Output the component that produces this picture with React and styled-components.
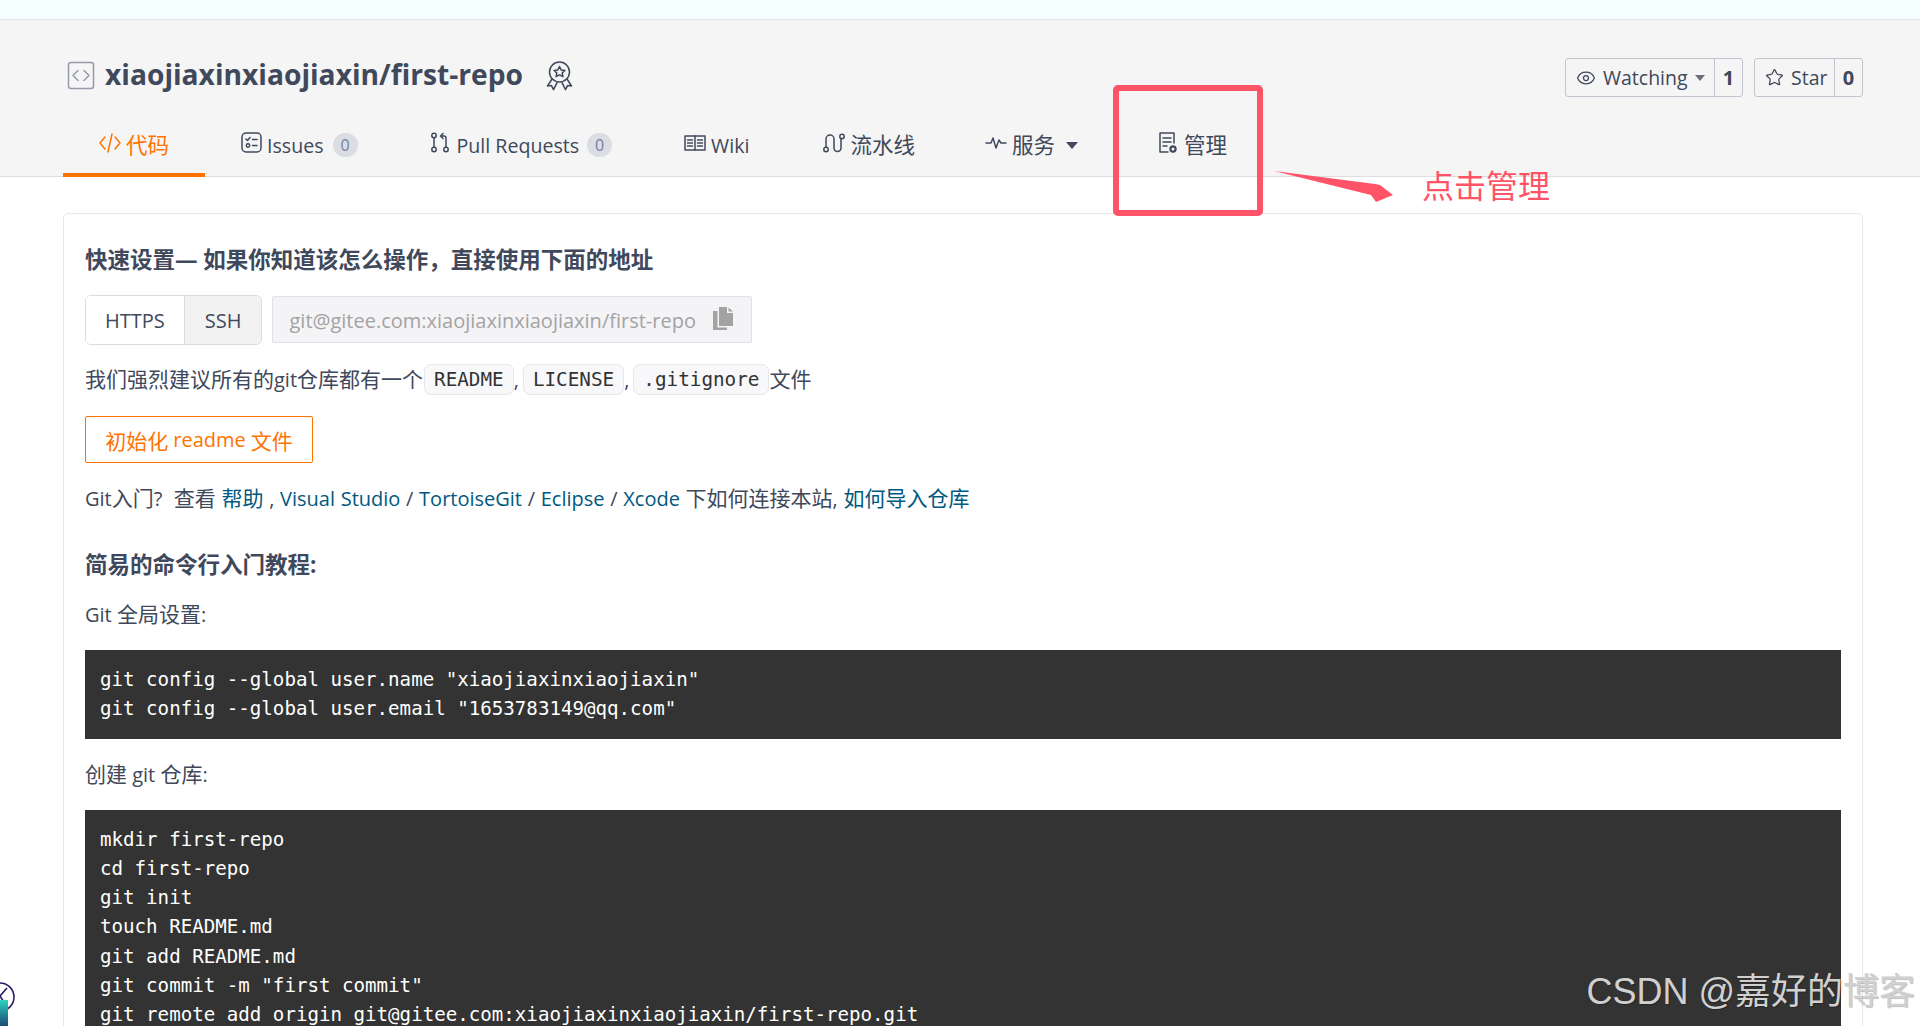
import React from "react";
import styled, { createGlobalStyle } from "styled-components";
import { Eye, Star } from "lucide-react";

const GlobalStyle = createGlobalStyle`
	html, body {
		margin: 0;
		padding: 0;
		background: #fff;
		overflow: hidden;
		height: 1026px;
	}
	body {
		font-family: "Open Sans", "Noto Sans CJK SC", sans-serif;
		color: #40485b;
		font-size: 20px;
	}
`;

const Svg = styled.svg`
	flex: none;
	fill: none;
	stroke: currentColor;
	stroke-width: 1.5;
	stroke-linecap: round;
	stroke-linejoin: round;
`;

const CodeIcon = () => (
	<Svg width="22" height="20" viewBox="0 0 22 20">
		<path d="M6 4l-5 6 5 6M16 4l5 6-5 6M13 1L9 19" />
	</Svg>
);

const IssuesIcon = () => (
	<Svg width="21" height="21" viewBox="0 0 21 21">
		<rect x="1" y="1" width="19" height="19" rx="4" />
		<path d="M5 7l1.5 1.5L9 5.5M11.5 7.5H16M11.5 13.5H16" />
		<circle cx="7" cy="13.5" r="1.7" />
	</Svg>
);

const PullIcon = () => (
	<Svg width="20" height="21" viewBox="0 0 20 21">
		<circle cx="4" cy="3.5" r="2.2" />
		<circle cx="4" cy="17.5" r="2.2" />
		<circle cx="16" cy="17.5" r="2.2" />
		<path d="M4 6v9M16 15V6a2 2 0 0 0-2-2h-3M13 1.500L10.500 4l2.500 2.500" />
	</Svg>
);

const WikiIcon = () => (
	<Svg width="22" height="16" viewBox="0 0 22 16">
		<rect x="1" y="1" width="20" height="14" />
		<path d="M11 1v14M3.500 5h5M3.500 8h5M3.500 11h5M13.500 5h5M13.500 8h5M13.500 11h5" />
	</Svg>
);

const PipelineIcon = () => (
	<Svg width="22" height="20" viewBox="0 0 22 20">
		<circle cx="3" cy="16.5" r="2.2" />
		<circle cx="19" cy="3.5" r="2.2" />
		<path d="M3 14V6a4 4 0 0 1 8 0v9a3.500 3.500 0 0 0 7 0V6" />
	</Svg>
);

const PulseIcon = () => (
	<Svg width="22" height="14" viewBox="0 0 22 14">
		<path d="M1 7h5l2-5 3 10 3-8 2 3h5" />
	</Svg>
);

const ManageIcon = () => (
	<Svg width="18" height="22" viewBox="0 0 18 22">
		<path d="M9 20H1V1h14v10M4 6h8M4 10h8M4 14h4" />
		<circle cx="14" cy="17" r="2.6" strokeWidth="2.2" />
	</Svg>
);

const RepoIcon = () => (
	<Svg width="28" height="29" viewBox="0 0 28 29" strokeWidth="3.2">
		<rect x="1.5" y="1.5" width="25" height="26" rx="2.5" />
		<path d="M11 9.500l-5 5 5 5M17 9.500l5 5-5 5" />
	</Svg>
);

const BadgeIcon = () => (
	<Svg width="27" height="30" viewBox="0 0 27 30">
		<circle cx="13.5" cy="11" r="10" />
		<path d="M13.500 5.500l1.700 3.400 3.700.5-2.700 2.600.7 3.700-3.400-1.800-3.400 1.800.7-3.700-2.700-2.600 3.700-.5z" />
		<path d="M6 18l-4.500 7 4-.4 2 4 3.500-7M21 18l4.500 7-4-.4-2 4-3.500-7" />
	</Svg>
);

const CopyIcon = () => (
	<svg width="20" height="23" viewBox="0 0 20 23" fill="#a3a3a3">
		<path d="M6 0h8v6h6v13H6zM15.500 0.500L20 4.500h-4.500z" />
		<path d="M0 4h4.500v16.500H14V23H0z" />
	</svg>
);

const App = () => {
	return (
		<Page>
			<GlobalStyle />
			<TopStrip />
			<Header>
				<HeaderRow>
					<RepoTitle>
						<RepoMark>
							<RepoIcon />
						</RepoMark>
						<RepoName>xiaojiaxinxiaojiaxin/first-repo</RepoName>
						<BadgeMark>
							<BadgeIcon />
						</BadgeMark>
					</RepoTitle>
					<Actions>
						<ActionGroup>
							<ActionMain $width={149}>
								<Eye size={20} strokeWidth={1.5} />
								<span>Watching</span>
								<SmallCaret />
							</ActionMain>
							<ActionCount $width={27}>1</ActionCount>
						</ActionGroup>
						<ActionGroup>
							<ActionMain $width={80}>
								<Star size={19} strokeWidth={1.6} />
								<span>Star</span>
							</ActionMain>
							<ActionCount $width={27}>0</ActionCount>
						</ActionGroup>
					</Actions>
				</HeaderRow>
				<Tabs>
					<Tab $active>
						<CodeIcon />
						<TabHan>代码</TabHan>
					</Tab>
					<Tab>
						<IssuesIcon />
						<span>Issues</span>
						<Count $left={4}>0</Count>
					</Tab>
					<Tab $gap={7}>
						<PullIcon />
						<span>Pull Requests</span>
						<Count $left={1}>0</Count>
					</Tab>
					<Tab $extra={2}>
						<WikiIcon />
						<span>Wiki</span>
					</Tab>
					<Tab $extra={-2}>
						<PipelineIcon />
						<TabHan>流水线</TabHan>
					</Tab>
					<Tab>
						<PulseIcon />
						<TabHan>服务</TabHan>
						<TabCaret />
					</Tab>
					<Tab $gap={7}>
						<ManageIcon />
						<TabHan>管理</TabHan>
					</Tab>
				</Tabs>
			</Header>

			<Card>
				<Heading>快速设置— 如果你知道该怎么操作，直接使用下面的地址</Heading>
				<CloneRow>
					<ProtocolGroup>
						<Protocol $side={19}>HTTPS</Protocol>
						<Protocol $muted $side={20}>
							SSH
						</Protocol>
					</ProtocolGroup>
					<AddressBox>
						<span>git@gitee.com:xiaojiaxinxiaojiaxin/first-repo</span>
						<CopyIcon />
					</AddressBox>
				</CloneRow>
				<AdviceLine>
					<Han>我们强烈建议所有的</Han>git<Han>仓库都有一个</Han>
					<Chip>README</Chip>,<Chip $gap>LICENSE</Chip>,<Chip $gap>.gitignore</Chip>
					<Han>文件</Han>
				</AdviceLine>
				<InitButton>
					<Han>初始化</Han> readme <Han>文件</Han>
				</InitButton>
				<HelpLine>
					Git<Han>入门</Han>?&nbsp; <Han>查看</Han>{" "}
					<Link>
						<Han>帮助</Han>
					</Link>{" "}
					, <Link>Visual Studio</Link> / <Link>TortoiseGit</Link> / <Link>Eclipse</Link> /{" "}
					<Link>Xcode</Link> <Han>下如何连接本站</Han>,{" "}
					<Link>
						<Han>如何导入仓库</Han>
					</Link>
				</HelpLine>
				<Heading $top={38}>简易的命令行入门教程:</Heading>
				<Label $top={21}>
					Git <Han>全局设置</Han>:
				</Label>
				<CodeBlock>
					{`git config --global user.name "xiaojiaxinxiaojiaxin"
git config --global user.email "1653783149@qq.com"`}
				</CodeBlock>
				<Label $top={21}>
					<Han>创建</Han> git <Han>仓库</Han>:
				</Label>
				<CodeBlock>
					{`mkdir first-repo
cd first-repo
git init
touch README.md
git add README.md
git commit -m "first commit"
git remote add origin git@gitee.com:xiaojiaxinxiaojiaxin/first-repo.git`}
				</CodeBlock>
			</Card>

			{/* annotations drawn on top of the screenshot */}
			<RedBox />
			<Arrow width="120" height="32" viewBox="0 0 120 32">
				<path d="M0 0L101 13 106 14 119 24 102 31 97 24z" />
			</Arrow>
			<Note>点击管理</Note>
			<CornerWidget>
				<CornerBar />
				<svg width="16" height="32" viewBox="0 0 16 32" fill="none" stroke="#2b1a6b" strokeWidth="1.6">
					<circle cx="0" cy="15" r="14" />
					<path d="M7 6L0 14l5 8" />
				</svg>
			</CornerWidget>
			<Watermark>CSDN @嘉好的博客</Watermark>
		</Page>
	);
};

export default App;

const Page = styled.div`
	position: relative;
	width: 1920px;
	height: 1026px;
	overflow: hidden;
`;

const TopStrip = styled.div`
	height: 19px;
	background: #f5ffff;
	border-bottom: 1px solid #e3e7e7;
`;

const Header = styled.header`
	height: 157px;
	box-sizing: border-box;
	padding: 38px 57px 0 63px;
	background: #f5f5f5;
	border-bottom: 1px solid #dedede;
`;

const HeaderRow = styled.div`
	display: flex;
	justify-content: space-between;
	align-items: flex-start;
	height: 39px;
`;

const RepoTitle = styled.div`
	display: flex;
	align-items: center;
	height: 32px;
`;

const RepoMark = styled.span`
	display: flex;
	margin: 3px 0 0 4px;
	color: #959baa;
`;

const RepoName = styled.span`
	margin-left: 10px;
	font-size: 28.2px;
	font-weight: 700;
	line-height: 32px;
	color: #40485b;
`;

const BadgeMark = styled.span`
	display: flex;
	margin: 3px 0 0 23px;
	color: #40485b;
`;

const Actions = styled.div`
	display: flex;
	gap: 11px;
`;

const ActionGroup = styled.div`
	display: flex;
	height: 39px;
	box-sizing: border-box;
	border: 1px solid #c3c5d0;
	border-radius: 3px;
`;

const ActionMain = styled.div`
	display: flex;
	align-items: center;
	gap: 7px;
	width: ${(p) => p.$width}px;
	box-sizing: border-box;
	padding-left: 10px;
	border-right: 1px solid #c3c5d0;
	font-size: 19.5px;
`;

const ActionCount = styled.div`
	width: ${(p) => p.$width}px;
	text-align: center;
	font-size: 20px;
	font-weight: 700;
	line-height: 37px;
`;

const SmallCaret = styled.i`
	width: 0;
	height: 0;
	border: 5px solid transparent;
	border-top: 6px solid #6b6e78;
	border-bottom: 0;
`;

const Tabs = styled.nav`
	display: flex;
	margin-top: 18px;
	height: 62px;
`;

const Tab = styled.div`
	display: flex;
	align-items: center;
	gap: ${(p) => p.$gap || 5}px;
	height: 62px;
	box-sizing: border-box;
	padding: 2px ${(p) => 36 + (p.$extra || 0)}px 0 36px;
	font-size: 19.6px;
	color: ${(p) => (p.$active ? "#fe7300" : "#40485b")};
	border-bottom: 4px solid ${(p) => (p.$active ? "#fe7300" : "transparent")};

	svg {
		margin-bottom: 5px;
	}
`;

const TabHan = styled.span`
	font-size: 21.5px;
	line-height: 28px;
`;

const Count = styled.span`
	display: inline-block;
	width: 25px;
	height: 24px;
	margin-left: ${(p) => p.$left}px;
	border-radius: 12px;
	background: #dadde2;
	color: #7480a8;
	font-size: 16px;
	line-height: 24px;
	text-align: center;
`;

const TabCaret = styled.i`
	width: 0;
	height: 0;
	margin: 0 9px 0 6px;
	border: 6.5px solid transparent;
	border-top: 7px solid #40485b;
	border-bottom: 0;
`;

const Card = styled.main`
	margin: 36px 57px 0 63px;
	padding: 33px 21px 0;
	border: 1px solid #e8e8e8;
	border-radius: 5px;
`;

const Heading = styled.div`
	margin-top: ${(p) => p.$top || -1}px;
	font-size: 22.5px;
	font-weight: 700;
	line-height: 28px;
`;

const Han = styled.span`
	font-size: 21px;
`;

const CloneRow = styled.div`
	display: flex;
	align-items: flex-start;
	gap: 10px;
	margin-top: 21px;
`;

const ProtocolGroup = styled.div`
	display: flex;
	height: 50px;
	box-sizing: border-box;
	border: 1px solid #dcdcdc;
	border-radius: 6px;
	overflow: hidden;
`;

const Protocol = styled.div`
	display: flex;
	align-items: center;
	padding: 0 ${(p) => p.$side}px;
	background: ${(p) => (p.$muted ? "#f2f2f2" : "#fff")};
	border-left: ${(p) => (p.$muted ? "1px solid #dcdcdc" : "none")};
`;

const AddressBox = styled.div`
	display: flex;
	align-items: center;
	justify-content: space-between;
	width: 480px;
	height: 47px;
	margin-top: 1px;
	box-sizing: border-box;
	padding: 1px 18px 0 16px;
	background: #f4f4f6;
	border: 1px solid #dfe2e8;
	border-radius: 2px;
	color: #a3a3a3;

	svg {
		margin-bottom: 4px;
	}
`;

const AdviceLine = styled.div`
	margin-top: 19px;
	height: 31px;
	line-height: 31px;
	white-space: nowrap;
`;

const Chip = styled.code`
	display: inline-block;
	height: 31px;
	box-sizing: border-box;
	margin: 0 0 0 ${(p) => (p.$gap ? 4 : 1)}px;
	padding: 0 9px;
	background: #f8f8fb;
	border: 1px solid #e6e6ec;
	border-radius: 7px;
	color: #333;
	font-family: "DejaVu Sans Mono", monospace;
	font-size: 19.3px;
	line-height: 30px;
	vertical-align: top;
`;

const InitButton = styled.div`
	display: flex;
	align-items: center;
	justify-content: center;
	gap: 5px;
	width: 228px;
	height: 47px;
	margin-top: 21px;
	box-sizing: border-box;
	border: 1px solid #fe7300;
	border-radius: 2px;
	color: #fe7300;
`;

const HelpLine = styled.div`
	margin-top: 21px;
	line-height: 28px;
	word-spacing: 0.5px;
	white-space: nowrap;
`;

const Link = styled.span`
	color: #005980;
`;

const Label = styled.div`
	margin-top: ${(p) => p.$top}px;
	line-height: 28px;
`;

const CodeBlock = styled.pre`
	margin: 21px 0 0;
	padding: 15px 15px;
	background: #333;
	color: #fff;
	font-family: "DejaVu Sans Mono", monospace;
	font-size: 19.15px;
	line-height: 29.3px;
`;

const RedBox = styled.div`
	position: absolute;
	left: 1113px;
	top: 85px;
	width: 150px;
	height: 131px;
	box-sizing: border-box;
	border: 6px solid #ff5468;
	border-radius: 5px;
`;

const Arrow = styled.svg`
	position: absolute;
	left: 1274px;
	top: 171px;
	fill: #ff5468;
`;

const Note = styled.div`
	position: absolute;
	left: 1422px;
	top: 164px;
	font-size: 32px;
	line-height: 44px;
	color: #ff5468;
`;

const CornerWidget = styled.div`
	position: absolute;
	left: 0;
	top: 982px;
	width: 16px;
	height: 44px;
`;

const CornerBar = styled.div`
	position: absolute;
	left: 0;
	top: 18px;
	width: 8px;
	height: 26px;
	background: linear-gradient(#2dd4c0, #1f6f8b 70%, #1b4f72);
`;

const Watermark = styled.div`
	position: absolute;
	right: 5px;
	top: 968px;
	font-family: "Liberation Sans", "Noto Sans CJK SC", sans-serif;
	font-size: 36px;
	line-height: 48px;
	color: #d0d0d0;
	text-shadow: 1px 1px 1px rgba(0, 0, 0, 0.25);
	white-space: nowrap;
`;
